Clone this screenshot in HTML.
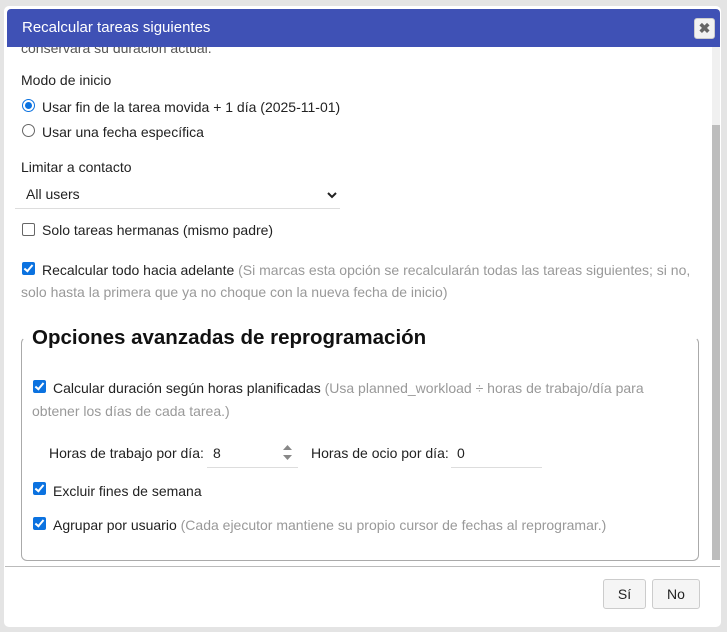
<!DOCTYPE html>
<html><head><meta charset="utf-8"><style>
body{margin:0;width:727px;height:632px;overflow:hidden;background:#e4e4e4;font-family:"Liberation Sans",Arial,sans-serif;font-size:14px;color:#222;position:relative}
.abs{position:absolute;white-space:nowrap}
.dlg{position:absolute;left:4px;top:6px;width:717px;height:621px;background:#fff;border-radius:5px}
.hdr{position:absolute;left:7px;top:9px;width:713px;height:38px;background:#3f51b5;border-radius:4px 4px 0 0;color:#fff;font-size:15px}
.x{position:absolute;left:694px;top:18px;width:19px;height:19px;background:#f2f2f2;border:1px solid #ccc;border-radius:3px;color:#666;font-weight:bold;font-size:14px;text-align:center;line-height:19px}
.cb{position:absolute;width:13px;height:13px;border-radius:2px;background:#0b72e0}
.cb::after{content:"";position:absolute;left:4px;top:1px;width:3px;height:7px;border:solid #fff;border-width:0 2px 2px 0;transform:rotate(40deg)}
.g{color:#999}
.btn{position:absolute;top:579px;height:28px;background:#f5f5f5;border:1px solid #ccc;border-radius:3px;text-align:center;line-height:28px}
</style></head><body>
<div class="dlg"></div>
<div class="hdr"><span class="abs" style="left:15px;top:10px">Recalcular tareas siguientes</span></div>
<div class="x">✖</div>
<div class="abs" style="left:712px;top:47px;width:8px;height:513px;background:#f0f0f0"></div>
<div class="abs" style="left:712px;top:125px;width:8px;height:435px;background:#bdbdbd"></div>
<div class="abs" style="left:21px;top:40px;color:#555;clip-path:inset(7px 0 0 0)">conservará su duración actual.</div>
<div class="abs" style="left:21px;top:72px">Modo de inicio</div>
<div class="abs" style="left:22px;top:99px;width:11px;height:11px;border:1px solid #0b72e0;border-radius:50%"><div style="margin:2px;width:7px;height:7px;border-radius:50%;background:#0b72e0"></div></div>
<div class="abs" style="left:42px;top:99px">Usar fin de la tarea movida + 1 día (2025-11-01)</div>
<div class="abs" style="left:22px;top:124px;width:11px;height:11px;border:1px solid #666;border-radius:50%"></div>
<div class="abs" style="left:42px;top:124px">Usar una fecha específica</div>
<div class="abs" style="left:21px;top:159px">Limitar a contacto</div>
<div class="abs" style="left:15px;top:208px;width:325px;height:1px;background:#ddd"></div>
<div class="abs" style="left:26px;top:186px">All users</div>
<svg class="abs" style="left:327px;top:191px" width="10" height="8"><path d="M1 2l4 4 4-4" stroke="#222" stroke-width="2" fill="none"/></svg>
<div class="abs" style="left:22px;top:223px;width:11px;height:11px;border:1px solid #666;border-radius:2px"></div>
<div class="abs" style="left:42px;top:222px">Solo tareas hermanas (mismo padre)</div>
<div class="cb" style="left:22px;top:262px"></div>
<div class="abs" style="left:42px;top:262px">Recalcular todo hacia adelante <span class="g">(Si marcas esta opción se recalcularán todas las tareas siguientes; si no,</span></div>
<div class="abs g" style="left:21px;top:284px">solo hasta la primera que ya no choque con la nueva fecha de inicio)</div>
<div class="abs" style="left:21px;top:337px;width:676px;height:222px;border:1px solid #aaa;border-top-color:transparent;border-radius:6px"></div>
<div class="abs" style="left:29px;top:322px;padding:0 3px;background:#fff;font-size:20.5px;font-weight:bold;color:#111;line-height:32px">Opciones avanzadas de reprogramación</div>
<div class="cb" style="left:33px;top:380px"></div>
<div class="abs" style="left:53px;top:380px">Calcular duración según horas planificadas <span class="g">(Usa planned_workload ÷ horas de trabajo/día para</span></div>
<div class="abs g" style="left:32px;top:403px">obtener los días de cada tarea.)</div>
<div class="abs" style="left:49px;top:445px">Horas de trabajo por día:</div>
<div class="abs" style="left:213px;top:445px">8</div>
<div class="abs" style="left:207px;top:467px;width:91px;height:1px;background:#ddd"></div>
<svg class="abs" style="left:282px;top:443px" width="11" height="19"><path d="M1 7l4.5-5 4.5 5z" fill="#888"/><path d="M1 12l4.5 5 4.5-5z" fill="#888"/></svg>
<div class="abs" style="left:311px;top:445px">Horas de ocio por día:</div>
<div class="abs" style="left:457px;top:445px">0</div>
<div class="abs" style="left:451px;top:467px;width:91px;height:1px;background:#ddd"></div>
<div class="cb" style="left:33px;top:482px"></div>
<div class="abs" style="left:53px;top:483px">Excluir fines de semana</div>
<div class="cb" style="left:33px;top:517px"></div>
<div class="abs" style="left:53px;top:517px">Agrupar por usuario <span class="g">(Cada ejecutor mantiene su propio cursor de fechas al reprogramar.)</span></div>
<div class="abs" style="left:5px;top:566px;width:715px;height:1px;background:#bbb"></div>
<div class="btn" style="left:603px;width:41px">Sí</div>
<div class="btn" style="left:652px;width:46px">No</div>
</body></html>
